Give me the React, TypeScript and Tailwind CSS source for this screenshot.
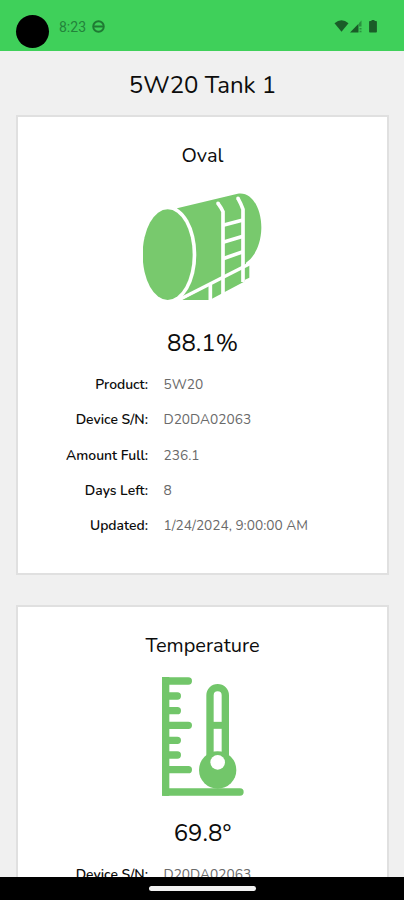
import type { ReactNode } from "react";

type Row = { label: string; value: string };

const tankRows: Row[] = [
  { label: "Product:", value: "5W20" },
  { label: "Device S/N:", value: "D20DA02063" },
  { label: "Amount Full:", value: "236.1" },
  { label: "Days Left:", value: "8" },
  { label: "Updated:", value: "1/24/2024, 9:00:00 AM" },
];

const temperatureRows: Row[] = [{ label: "Device S/N:", value: "D20DA02063" }];

function StatusBar() {
  return (
    <header className="flex h-[51px] shrink-0 items-start bg-[#3fd05a] pl-4 pr-[26px] text-[#1a5c28]">
      <div className="mt-[15px] size-[33px] rounded-full bg-black" />
      <span className="ml-[10px] mt-[18px] font-['Roboto'] text-[14px] leading-[18px] text-[#23833a]">
        8:23
      </span>
      <svg className="ml-[6px] mt-[19.5px] size-[13px]" viewBox="0 0 13 13" fill="none" stroke="#1f7a33">
        <circle cx="6.5" cy="6.5" r="5.3" strokeWidth="1.9" />
        <path d="M1 6.5h11" strokeWidth="2" />
      </svg>
      <svg className="ml-auto mt-[19.5px] h-[13px] w-[44px]" viewBox="0 0 44 13" fill="currentColor">
        <path d="M0.5 3.2Q7.5 -2.6 14.5 3.2L7.5 11.8Z" />
        <path d="M16 12.500 24.500 3.800v8.700z" />
        <path d="M25 3 27.500 .500v6H25zM25.500 8h2v1.500h-2zM25.500 10.700h2v1.600h-2z" opacity=".55" />
        <path d="M37.500 0h3v1h1.600q.8 0 .8.800v9.900q0 .8-.8.800h-6.200q-.8 0-.8-.8V1.800q0-.8.8-.8h1.600z" />
      </svg>
    </header>
  );
}

function TankIcon() {
  return (
    <svg className="h-[107px] w-[119px]" viewBox="41 159 357 321" fill="#78c96d">
      <path d="M143 205 325 161C370 153 397 210 396 265C395 318 372 354 350 368V378L160 474Z" />
      <ellipse cx="117" cy="344" rx="84" ry="146" fill="#fff" />
      <ellipse cx="115" cy="344" rx="75" ry="136" />
      <path d="M157 480 360 372V413L347 419V424L248 476V480Z" />
      <g fill="none" stroke="#fff" strokeWidth="11">
        <path d="M153 477 364 370" strokeWidth="10" />
        <path d="M243 430v52M281 462V215Q277 205 266 190M341 426V208Q336 193 326 175" />
        <path d="M281 256 341 240M281 307 341 289M281 356 341 335" strokeWidth="11" />
        <path d="M266 190v.1M326 175v.1" strokeLinecap="round" />
      </g>
    </svg>
  );
}

function ThermometerIcon() {
  return (
    <svg className="h-[119px] w-[82px]" viewBox="96 141 246 357" fill="none" stroke="#72c66a">
      <path d="M107 141V497" strokeWidth="22" />
      <path
        d="M107 153H175M107 198H142M107 242H142M107 286H175M107 331H142M107 375H142M107 419H175M107 486H330"
        strokeWidth="22"
        strokeLinecap="round"
      />
      <path d="M96 141h20v20H96zM96 477h20v20H96z" fill="#72c66a" stroke="none" />
      <path d="M240 400V196a23 23 0 0 1 46 0v204" strokeWidth="22" />
      <path d="M240 286h46" strokeWidth="21" />
      <circle cx="263" cy="420" r="56" fill="#72c66a" stroke="none" />
      <circle cx="263" cy="397" r="22" fill="#fff" stroke="none" />
    </svg>
  );
}

function Details({ rows }: { rows: Row[] }) {
  return (
    <dl className="mt-2 w-full text-[13.7px] leading-[35.25px]">
      {rows.map((row) => (
        <div key={row.label} className="flex h-[35.25px] items-baseline gap-[15.5px]">
          <dt className="w-[130px] text-right text-[13.9px] font-semibold">{row.label}</dt>
          <dd className="text-[#6a6a6a]">{row.value}</dd>
        </div>
      ))}
    </dl>
  );
}

type CardProps = { title: string; icon: ReactNode; reading: string; rows: Row[]; className: string };

function Card({ title, icon, reading, rows, className }: CardProps) {
  return (
    <section
      className={`ml-4 flex w-[373px] shrink-0 flex-col items-center border-2 border-[#e0e0e0] bg-white ${className}`}
    >
      <h2 className="mt-[25px] text-[20px] leading-[28px]">{title}</h2>
      {icon}
      <p className="text-[24px] leading-[32px]">{reading}</p>
      <Details rows={rows} />
    </section>
  );
}

export default function App() {
  return (
    <div className="flex h-[900px] w-[404px] flex-col overflow-hidden bg-[#f0f0f0] font-['Nunito','Lato',sans-serif] text-[#0c0c0c]">
      <StatusBar />
      <main className="flex min-h-0 flex-1 flex-col overflow-hidden">
        <h1 className="mt-[18px] h-[32px] shrink-0 pl-px text-center text-[24px] leading-[32px]">
          5W20 Tank 1
        </h1>
        <Card
          className="mt-[14px] h-[460px]"
          title="Oval"
          icon={<div className="mb-[27px] mt-[23px]"><TankIcon /></div>}
          reading="88.1%"
          rows={tankRows}
        />
        <Card
          className="mt-[30px] h-[460px]"
          title="Temperature"
          icon={<div className="mb-[21px] mt-[17px]"><ThermometerIcon /></div>}
          reading="69.8°"
          rows={temperatureRows}
        />
      </main>
      <footer className="flex h-[23px] shrink-0 justify-center bg-black pt-[9px]">
        <div className="h-[5px] w-[107px] rounded-full bg-[#f1f1f1]" />
      </footer>
    </div>
  );
}
